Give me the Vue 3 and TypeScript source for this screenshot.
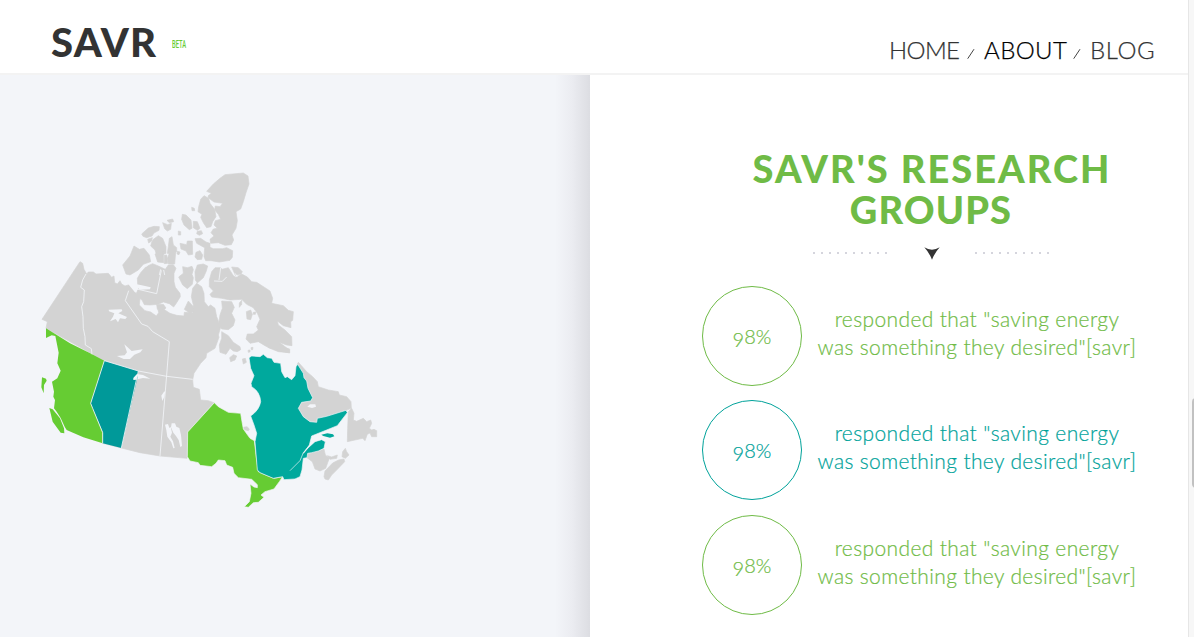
<script setup lang="ts">
interface Finding {
  value: string
  tone: 'green' | 'teal'
}

const links: string[] = ['HOME', 'ABOUT', 'BLOG']
const findings: Finding[] = [
  { value: '8%', tone: 'green' },
  { value: '8%', tone: 'teal' },
  { value: '8%', tone: 'green' },
]
const dots: number[] = Array.from({ length: 10 }, (_, i) => i)

const arctic: string[] = [
  'M330 55L345 44L400 39L414 48L417 72L408 98L400 125L392 147L378 155L382 182L378 205L366 225L371 240L364 254L345 256L325 248L302 250L300 238L312 228L303 218L310 207L322 205L312 195L316 182L332 178L325 163L314 150L316 138L330 140L338 130L312 126L296 114L294 108L304 100L290 94L310 72Z',
  'M282 107L296 115L300 130L314 148L318 170L308 185L303 200L290 203L280 188L272 172L276 163L264 155L266 140L272 118Z',
  'M217 163L228 165L243 180L246 205L238 209L222 195L215 178Z',
  'M250 184L262 185L270 205L262 211L250 203Z',
  'M262 214L274 212L278 221L268 226L260 221Z',
  'M245 142L253 145L254 152L246 152Z',
  'M205 213L212 215L212 225L205 225Z',
  'M158 188L173 194L184 190L182 208L172 213L164 206Z',
  'M171 181L188 177L191 185L178 188Z',
  'M95 222L115 204L132 199L148 200L147 211L132 219L126 228L110 233L99 229Z',
  'M113 238L127 233L125 243L116 249Z',
  'M125 247L130 238L145 227L158 235L168 260L168 280L150 287L140 286L135 270L122 258Z',
  'M178 235L186 230L190 255L200 263L200 275L188 283L172 280L175 260Z',
  'M202 274L210 276L207 284L201 282Z',
  'M210 250L230 254L232 243L247 243L248 283L235 285L228 273L213 267Z',
  'M255 236L272 235L288 246L300 250L300 262L310 266L338 266L350 263L368 272L367 292L360 301L328 306L303 302L287 302L282 290L284 263L260 250Z',
  'M258 277L270 272L278 285L275 298L262 299L255 291Z',
  'M72 258L88 268L102 265L118 285L122 305L100 313L85 330L60 345L48 342L38 315L60 288Z',
]

const nunavut: string[] = [
  'M195 38L212 38L216 43L235 38L250 62L258 67L275 57L292 66L305 80L320 82L345 98L360 108L368 130L365 145L400 152L415 166L430 170L428 196L422 200L423 218L400 212L382 198L385 210L405 225L425 245L426 272L410 270L388 262L418 285L418 293L385 290L360 280L345 272L325 260L300 265L288 252L292 237L310 237L325 225L320 215L330 193L322 175L310 158L290 148L275 133L240 135L215 130L185 126L180 118L190 108L178 95L178 75L185 50Z',
  'M245 36L265 38L277 50L273 57L256 61Z',
  'M142 30L160 27L173 33L169 48L160 68L142 84L136 75L135 50Z',
  'M98 35L112 38L126 34L130 44L126 58L130 68L127 88L112 101L98 90L86 66L100 55Z',
  'M115 138L130 155L129 170L120 175L103 163Z',
  'M215 138L245 140L253 157L245 175L255 195L250 212L235 224L215 222L205 212L210 180L217 160Z',
  'M215 230L235 242L250 262L270 275L272 284L262 290L250 288L240 280L233 290L228 298L210 292L208 270L215 250Z',
  'M239 308L250 299L260 303L255 315L242 320Z',
  'M277 312L286 310L289 322L280 327Z',
  'M289 170L302 165L307 178L302 194L291 192Z',
  'M268 144L275 136L275 148L268 157Z',
  'M310 172L317 171L316 178L310 178Z',
  'M294 286L300 285L300 291L295 292Z',
  'M303 278L309 277L308 284L304 284Z',
]

const atlantic: string[] = [
  'M175 52L185 63L200 80L218 95L232 110L235 125L265 135L295 140L298 150L320 155L333 170L334 190L318 196L260 214L232 220L230 232L210 230L190 215L175 190L185 172L212 168L218 158L204 130L200 108L192 98L190 85L172 58Z',
  'M325 200L335 190L342 205L340 225L350 229L370 220L380 230L392 225L395 235L388 250L395 255L402 253L410 257L410 275L395 275L390 264L382 268L375 287L368 280L345 285L322 290L323 250Z',
  'M201 338L203 325L235 318L252 312L256 330L268 340L263 353L257 370L240 378L225 372L217 350Z',
  'M262 332L275 336L292 330L290 340L270 343Z',
  'M252 395L255 378L278 354L296 345L312 342L314 350L290 375L275 390L265 405L255 402Z',
  'M308 320L316 310L320 320L327 330L316 340L306 335Z',
  'M86 0L120 0L134 8L149 12L149 24L125 19L105 12L85 8Z',
]
</script>

<template>
  <div class="page">
    <div class="site">
      <header class="top">
        <div class="brand">
          <span class="logo">SAVR</span>
          <span class="beta">BETA</span>
        </div>
        <nav class="menu">
          <template v-for="(link, i) in links" :key="link">
            <svg v-if="i > 0" class="slash" viewBox="0 0 8 12"><path d="M.7 10.7L7 1.2" /></svg>
            <a :class="['link', 'l-' + link.toLowerCase()]">{{ link }}</a>
          </template>
        </nav>
      </header>

      <main class="body">
        <section class="map-pane">
          <svg class="map" viewBox="0 0 590 562" aria-label="Map of Canada">
            <g transform="translate(30 175) scale(.333333)">
              <g class="land">
                <g transform="translate(240 -270)">
                  <path v-for="d in arctic" :key="d" :d="d" />
                </g>
                <path d="M324 118L322 85L332 68L348 50L368 41L385 48L396 53L406 58L415 45L430 44L438 55L432 70L432 95L436 112L450 130L451 140L440 158L431 171L418 161L400 156L385 163L360 165L343 164L336 150L322 140L320 128Z" />
                <path d="M375 12L400 5L401 38L383 36Z" />
                <path d="M403 16L410 15L413 40L403 41Z" />
                <path d="M412 25L420 5L437 8L434 42L415 42Z" />
                <path d="M380 164L400 163L408 174L398 182L382 178Z" />
                <path d="M150 35L158 40L162 58L170 72L175 66L190 66L198 72L235 70L245 82L252 78L254 98L262 102L270 92L275 102L285 108L298 104L310 117L318 128L330 146L328 165L345 182L362 186L379 198L386 188L384 179L400 177L420 190L440 196L462 198L463 187L488 188L490 165L484 140L488 115L500 100L515 110L522 130L523 155L535 170L542 165L555 175L560 200L566 215L571 235L565 255L567 262L555 295L530 310L528 323L512 340L492 370L488 390L490 412L508 418L512 450L535 452L552 458L473 546L471 625L390 618L330 608L274 594L218 580L182 460L223 332L48 235L52 215L36 208Z" />
                <g transform="translate(360 15)">
                  <path v-for="d in nunavut" :key="d" :d="d" />
                </g>
                <g transform="translate(630 285)">
                  <path v-for="d in atlantic" :key="d" :d="d" />
                </g>
                <path d="M640 532L651 530L658 537L655 542L643 539Z" />
              </g>

              <g class="water">
                <path d="M236 179L275 178L277 183L265 190L291 201L286 207L270 205L264 217L257 207L240 214L249 200L253 190L237 184Z" />
                <path d="M261 318L284 316L291 307L283 283L305 303L338 298L331 307L313 314L300 327L281 327Z" />
                <path d="M310 384L320 372L339 375L361 386L339 384L329 386L310 390Z" />
                <path d="M402 425L406 424L403 440L397 453L394 437Z" />
                <path d="M405 524L414 522L418 534L422 531L426 548L421 560L429 574L434 594L430 595L424 577L412 560L409 540Z" />
                <path d="M425 520L435 520L439 530L448 534L453 555L456 588L451 591L446 570L438 558L430 548L423 532Z" />
                <path d="M294 101L320 103L335 106L362 112L360 118L330 119L325 115L316 128Z" />
                <path d="M832 470L840 463L856 463L858 470L846 474Z" />
              </g>

              <path class="green" d="M48 235L120 280L185 312L223 332L182 460L188 475L218 548L218 580L160 562L110 540L104 530L92 504L80 485L72 475L75 450L70 440L72 425L66 395L82 385L92 362L82 340L86 308L76 258L65 256L48 264Z" />
              <path class="green" d="M36 382L48 386L50 392L42 405L41 430L34 412Z M58 474L68 478L90 505L102 535L103 550L92 548L68 515Z" />
              <path class="tealdark" d="M223 332L325 363L322 385L274 594L218 580L219 548L188 475L182 460Z" />
              <path class="water" d="M310 384L320 373L325 373L319 389L310 390Z" />

              <g class="edges">
                <path d="M168 72L158 90L152 112L163 120L161 155L155 170L159 200L160 235L165 260L166 285L184 296L186 313" />
                <path d="M296 122L286 152L335 222L354 229L368 245L418 275L410 375L390 618" />
                <path d="M223 332L325 363L410 379L488 388M325 363L274 594" />
                <path d="M223 332L182 460L188 475L218 548L218 580" />
                <path d="M320 117L380 131L394 61M348 50L359 40M392 58L388 75M401 60L404 75" />
                <path d="M572 53L567 90M615 70L622 80" />
                <path d="M552 93L577 94L590 81" />
              </g>

              <g transform="translate(360 300)">
                <path class="green rim" d="M193 158L205 170L235 187L272 190L276 215L280 237L300 265L313 272L320 330L325 365L340 372L372 385L398 380L388 395L372 417L345 425L333 435L342 442L325 457L310 458L295 472L283 470L298 455L303 430L300 402L312 411L322 413L322 404L305 388L265 383L252 370L248 352L230 345L225 332L205 330L198 340L185 350L150 346L145 338L120 333L112 320L113 246Z" />
              </g>
              <g transform="translate(630 285)">
                <path class="teal rim" d="M27 38L35 33L60 35L70 28L82 38L95 40L102 52L122 55L125 80L135 98L142 95L155 104L165 92L168 65L173 58L190 85L192 98L200 108L204 130L218 158L212 168L185 172L175 190L190 215L210 230L230 232L232 220L260 214L318 196L322 203L305 225L292 242L260 255L215 273L208 300L190 325L205 308L225 290L245 284L256 290L252 310L235 318L215 323L203 325L201 338L190 340L186 375L180 395L165 402L132 404L128 395L100 400L60 383L52 375L45 290L50 265L42 240L32 213Q58 195 62 170Q60 140 35 125L33 115L42 92L32 70Z" />
                <path class="teal" d="M244 269L262 265L279 268L283 274L270 278L250 273Z" />
                <path class="river" d="M209 301L190 323L180 347L150 377" />
              </g>
            </g>
          </svg>
        </section>

        <section class="research">
          <h1 class="title">
            <span class="line first">SAVR'S RESEARCH</span>
            <span class="line second">GROUPS</span>
          </h1>
          <div class="divider">
            <span class="dots"><i v-for="n in dots" :key="n" /></span>
            <svg class="arrow" viewBox="0 0 16 13"><path d="M.3.3Q4 2.7 8 2.7Q12 2.7 15.7.3Q10.5 6 8 12.8Q5.5 6 .3.3Z" /></svg>
            <span class="dots"><i v-for="n in dots" :key="n" /></span>
          </div>
          <div v-for="(f, i) in findings" :key="i" :class="['finding', f.tone]">
            <div class="circle"><span class="nine">9</span>{{ f.value }}</div>
            <p class="quote">
              <span class="q1">responded that "saving energy</span>
              <span class="q2">was something they desired"[savr]</span>
            </p>
          </div>
        </section>
      </main>
    </div>
    <aside class="track"><div class="thumb" /></aside>
  </div>
</template>

<style>
body {
  overflow: hidden;
}
</style>

<style scoped>
.page {
  display: flex;
  width: 1194px;
  height: 637px;
  overflow: hidden;
  background: #fff;
  font-family: Lato, "Open Sans", sans-serif;
}
.site {
  width: 1188px;
  display: flex;
  flex-direction: column;
}
.top {
  height: 73px;
  flex: none;
  display: flex;
  justify-content: space-between;
  border-bottom: 2px solid #f3f3f3;
}
.brand {
  display: flex;
  padding-left: 51px;
}
.logo {
  width: 121px;
  padding-top: 17px;
  font-size: 40px;
  line-height: 50px;
  font-weight: 900;
  color: #333;
  letter-spacing: 1.3px;
}
.beta {
  padding-top: 38px;
  font: 500 10px/13px Roboto, sans-serif;
  color: #6c3;
  transform: scaleX(.58);
  transform-origin: left;
}
.menu {
  display: flex;
  padding: 35px 33px 0 0;
  height: 30px;
}
.link {
  font-size: 24px;
  line-height: 30px;
  font-weight: 300;
  color: #333;
  white-space: nowrap;
  -webkit-text-stroke: .25px currentColor;
}
.l-home { width: 78px; letter-spacing: -.6px; }
.l-about { width: 89px; color: #000; letter-spacing: .4px; }
.l-blog { width: 65px; letter-spacing: .6px; }
.slash {
  width: 8px;
  height: 12px;
  margin: 13px 9px 0 0;
}
.slash path {
  fill: none;
  stroke: #444;
  stroke-width: 1;
}
.body {
  flex: 1;
  display: flex;
}
.map-pane {
  width: 590px;
  background: linear-gradient(to right, rgba(222, 223, 228, 0) 555px, #ebecf1 572px, #dcdde2 590px), #f3f5f9;
}
.map {
  display: block;
  width: 590px;
  height: 562px;
}
.land { fill: #d3d3d3; stroke: #d3d3d3; stroke-width: 2; stroke-linejoin: round; }
.water { fill: #f3f5f9; }
.map .green { fill: #6c3; }
.map .teal { fill: #00a99d; }
.tealdark { fill: #099; }
.rim { stroke: #f3f5f9; stroke-width: 2; stroke-linejoin: round; }
.edges { fill: none; stroke: #f3f5f9; stroke-width: 2.5; }
.river { fill: none; stroke: #f3f5f9; stroke-width: 2; }
.research {
  width: 598px;
}
.title {
  margin: 73px 0 0;
  padding-left: 84px;
  text-align: center;
  font-size: 38px;
  line-height: 41px;
  font-weight: 900;
  color: #6fbb46;
}
.line {
  display: block;
  white-space: nowrap;
}
.first { letter-spacing: 2px; padding-left: 2px; }
.second { letter-spacing: 1.1px; }
.divider {
  display: flex;
  align-items: center;
  padding: 0 0 0 223px;
  height: 14px;
  margin-top: 16px;
}
.dots {
  display: flex;
  gap: 6px;
  width: 74px;
}
.dots i {
  flex: none;
  width: 2px;
  height: 2px;
  background: #d5d5dd;
}
.arrow {
  width: 16px;
  height: 13px;
  margin: 0 35px 0 36.5px;
  flex: none;
}
.arrow path { fill: #333; }
.arrow + .dots { margin-left: .5px; }
.finding {
  display: flex;
  height: 100px;
  margin: 0 0 14px 112px;
}
.divider + .finding { margin-top: 26px; }
.finding.green { color: #6fbb46; }
.finding.teal { color: #00a29a; margin-bottom: 15px; }
.circle {
  box-sizing: border-box;
  width: 100px;
  height: 100px;
  flex: none;
  border: 1px solid currentColor;
  border-radius: 50%;
  text-align: center;
  font-size: 20px;
  line-height: 98px;
  font-weight: 300;
  -webkit-text-stroke: .2px currentColor;
}
.nine {
  position: relative;
  top: 3px;
}
.quote {
  width: 350px;
  margin: 19px 0 0;
  text-align: center;
  font-size: 21px;
  line-height: 28px;
  font-weight: 300;
  letter-spacing: .37px;
  -webkit-text-stroke: .2px currentColor;
}
.quote span { display: block; white-space: nowrap; }
.track {
  box-sizing: border-box;
  width: 6px;
  height: 637px;
  border-left: 1px solid #e6e6e6;
  background: #f7f7f7;
  padding: 398px 0 0 3px;
}
.thumb {
  width: 8px;
  height: 90px;
  border-radius: 4px;
  background: #c1c1c1;
}
</style>
